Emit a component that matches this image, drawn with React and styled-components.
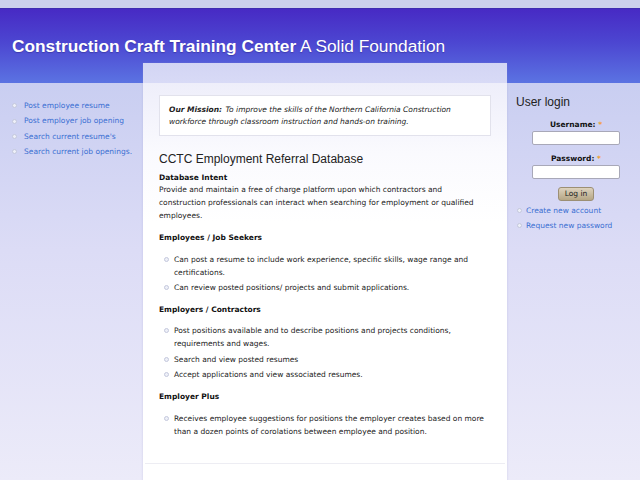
import React from "react";
import styled, { createGlobalStyle } from "styled-components";

const Global = createGlobalStyle`
  html, body { margin: 0; padding: 0; }
  body {
    background: #ebe9f8;
    font-family: "DejaVu Sans", Verdana, sans-serif;
    font-size: 7.5px;
    color: #333;
  }
`;

const Page = styled.div`
  width: 640px;
  min-height: 480px;
  background: linear-gradient(to bottom, #ccd0ec 0, #ccd0ec 8px, #c9cef1 83px, #dcdcf6 250px, #ecebf9 480px);
  overflow: hidden;
`;

const TopStrip = styled.div`
  height: 8px;
  background: #ccd0ec;
  border-bottom: 1px solid #3f2cb0;
`;

const Header = styled.header`
  height: 74px;
  background: linear-gradient(to bottom, #472ac4 0%, #4c46d1 45%, #5b73e2 100%);
  padding: 27px 0 0 12px;
  box-sizing: border-box;
`;

const SiteName = styled.h1`
  margin: 0;
  font-family: "Liberation Sans", Arial, sans-serif;
  font-size: 17.3px;
  line-height: 20px;
  font-weight: 400;
  color: #fff;
  text-shadow: 0 1px 1px rgba(30, 20, 100, 0.35);
  b { font-weight: 700; }
`;

const Main = styled.div`
  display: grid;
  grid-template-columns: 143px 364px 1fr;
  margin-top: -20px;
  align-items: start;
`;

const LeftSide = styled.aside`
  padding: 35px 0 0 0;
`;

const RightSide = styled.aside`
  padding: 31px 4px 0 9px;
  display: flex;
  flex-direction: column;
`;

const NavList = styled.ul`
  list-style: none;
  margin: 0;
  padding: 0 0 0 ${(p) => p.$indent}px;
`;

const Bullet = styled.li`
  position: relative;
  padding-left: ${(p) => p.$gap}px;
  line-height: ${(p) => p.$lh}px;
  margin-bottom: ${(p) => p.$mb || 0}px;
  &::before {
    content: "";
    position: absolute;
    left: 0;
    top: ${(p) => p.$lh / 2 - 2.5}px;
    width: 3px;
    height: 3px;
    border-radius: 50%;
    border: 1px solid #c4c8dc;
    background: #eef0f8;
  }
`;

const Link = styled.a`
  color: #3a6fd2;
  text-decoration: none;
`;

const Panel = styled.main`
  position: relative;
  min-height: 440px;
  background: linear-gradient(to bottom, #d3d5f4 0, #d8daf6 20px, #eeeefa 20px, #fafafe 90px, #ffffff 160px);
  box-shadow: 0 0 2px rgba(150, 150, 200, 0.35);
  padding: 32px 16px 0 16px;
  box-sizing: border-box;
  color: #222;
`;

const Mission = styled.div`
  background: #fff;
  border: 1px solid #e2e2ec;
  padding: 8px 9px 7px 9px;
  font-style: italic;
  line-height: 12px;
  color: #222;
  b { font-weight: 700; margin-right: 1px; }
`;

const Title = styled.h2`
  margin: 15px 0 0 0;
  font-family: "Liberation Sans", Arial, sans-serif;
  font-size: 12px;
  line-height: 16px;
  font-weight: 400;
  color: #222;
`;

const Para = styled.p`
  margin: 4.5px 0 0 0;
  line-height: 12.7px;
  b { font-weight: 700; color: #111; }
`;

const SubHead = styled.h3`
  margin: 9px 0 0 0;
  font-size: 7.5px;
  line-height: 13px;
  font-weight: 700;
  color: #111;
`;

const ItemList = styled.ul`
  list-style: none;
  margin: 8.5px 0 0 0;
  padding: 0 0 0 5px;
`;

const Divider = styled.hr`
  margin: 25px -14px 0 -14px;
  border: 0;
  border-top: 1px solid #ededf3;
  height: 0;
`;

const BlockTitle = styled.h2`
  margin: 0 0 8px 0;
  font-family: "Liberation Sans", Arial, sans-serif;
  font-size: 12px;
  line-height: 16px;
  font-weight: 400;
  color: #222;
`;

const Form = styled.form`
  display: flex;
  flex-direction: column;
  align-items: center;
`;

const Label = styled.label`
  font-weight: 700;
  color: #111;
  line-height: 13px;
  margin-top: ${(p) => p.$mt || 0}px;
  span { color: #f0a030; }
`;

const Input = styled.input`
  width: 88px;
  height: 14px;
  box-sizing: border-box;
  border: 1px solid #a8a8b8;
  border-radius: 2px;
  background: #fff;
  margin: 0;
  padding: 0 2px;
`;

const Button = styled.button`
  margin-top: 8px;
  width: 36px;
  height: 14px;
  padding: 0;
  font-family: "DejaVu Sans", Verdana, sans-serif;
  font-size: 7.5px;
  color: #222;
  border: 1px solid #9c8f74;
  border-radius: 3px;
  background: linear-gradient(to bottom, #ddd2bd, #b5a685);
`;

const LoginLinks = styled.ul`
  list-style: none;
  margin: 2.5px 0 0 0;
  padding: 0 0 0 1px;
`;

const Item = ({ children, mb }) => (
  <Bullet $gap={10} $lh={13} $mb={mb}>{children}</Bullet>
);

export default function App() {
  return (
    <>
      <Global />
      <Page>
        <TopStrip />
        <Header>
          <SiteName>
            <b>Construction Craft Training Center</b> A Solid Foundation
          </SiteName>
        </Header>
        <Main>
          <LeftSide>
            <NavList $indent={12}>
              {[
                "Post employee resume",
                "Post employer job opening",
                "Search current resume's",
                "Search current job openings.",
              ].map((t) => (
                <Bullet key={t} $gap={12} $lh={15.4}>
                  <Link href="#">{t}</Link>
                </Bullet>
              ))}
            </NavList>
          </LeftSide>

          <Panel>
            <Mission>
              <b>Our Mission:</b> To improve the skills of the Northern California Construction
              workforce through classroom instruction and hands-on training.
            </Mission>
            <Title>CCTC Employment Referral Database</Title>
            <Para>
              <b>Database Intent</b>
              <br />
              Provide and maintain a free of charge platform upon which contractors and
              construction professionals can interact when searching for employment or qualified
              employees.
            </Para>

            <SubHead>Employees / Job Seekers</SubHead>
            <ItemList>
              <Item mb={2}>Can post a resume to include work experience, specific skills, wage range and certifications.</Item>
              <Item>Can review posted positions/ projects and submit applications.</Item>
            </ItemList>

            <SubHead>Employers / Contractors</SubHead>
            <ItemList>
              <Item mb={2.5}>Post positions available and to describe positions and projects conditions, requirements and wages.</Item>
              <Item mb={2.5}>Search and view posted resumes</Item>
              <Item>Accept applications and view associated resumes.</Item>
            </ItemList>

            <SubHead>Employer Plus</SubHead>
            <ItemList>
              <Item>Receives employee suggestions for positions the employer creates based on more than a dozen points of corolations between employee and position.</Item>
            </ItemList>
            <Divider />
          </Panel>

          <RightSide>
            <BlockTitle>User login</BlockTitle>
            <Form onSubmit={(e) => e.preventDefault()}>
              <Label htmlFor="user">
                Username: <span>*</span>
              </Label>
              <Input id="user" type="text" />
              <Label htmlFor="pass" $mt={6.5}>
                Password: <span>*</span>
              </Label>
              <Input id="pass" type="password" />
              <Button type="submit">Log in</Button>
            </Form>
            <LoginLinks>
              <Bullet $gap={9} $lh={15}>
                <Link href="#">Create new account</Link>
              </Bullet>
              <Bullet $gap={9} $lh={15}>
                <Link href="#">Request new password</Link>
              </Bullet>
            </LoginLinks>
          </RightSide>
        </Main>
      </Page>
    </>
  );
}
